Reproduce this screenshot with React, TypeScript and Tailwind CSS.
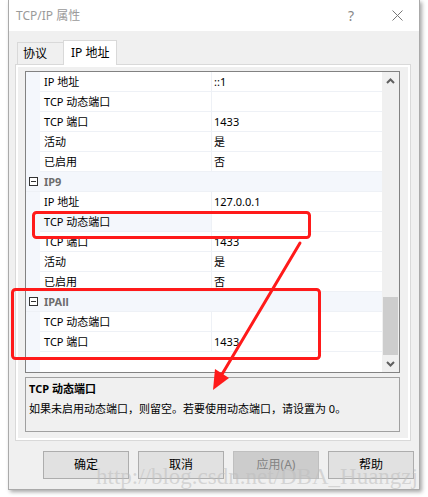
import React from 'react';

type Row =
  | { kind: 'cat'; label: string }
  | { kind: 'prop'; name: string; value: string; selected?: boolean };

const rows: Row[] = [
  { kind: 'prop', name: 'IP 地址', value: '::1' },
  { kind: 'prop', name: 'TCP 动态端口', value: '' },
  { kind: 'prop', name: 'TCP 端口', value: '1433' },
  { kind: 'prop', name: '活动', value: '是' },
  { kind: 'prop', name: '已启用', value: '否' },
  { kind: 'cat', label: 'IP9' },
  { kind: 'prop', name: 'IP 地址', value: '127.0.0.1' },
  { kind: 'prop', name: 'TCP 动态端口', value: '', selected: true },
  { kind: 'prop', name: 'TCP 端口', value: '1433' },
  { kind: 'prop', name: '活动', value: '是' },
  { kind: 'prop', name: '已启用', value: '否' },
  { kind: 'cat', label: 'IPAll' },
  { kind: 'prop', name: 'TCP 动态端口', value: '' },
  { kind: 'prop', name: 'TCP 端口', value: '1433' },
];

const MinusBox: React.FC = () => (
  <div className="w-[9px] h-[9px] border border-[#333] bg-white flex items-center justify-center">
    <div className="w-[5px] h-px bg-[#333]" />
  </div>
);

const Chevron: React.FC<{ up?: boolean }> = ({ up }) => (
  <svg width="9" height="6" viewBox="0 0 9 6">
    <path
      d={up ? 'M1 5 L4.5 1.5 L8 5' : 'M1 1 L4.5 4.5 L8 1'}
      fill="none"
      stroke="#606060"
      strokeWidth="2"
    />
  </svg>
);

const PropertyGrid: React.FC = () => (
  <div className="h-[302px] border border-[#828282] bg-white flex">
    {/* Rows */}
    <div className="w-[356px] flex flex-col">
      {rows.map((r, i) =>
        r.kind === 'cat' ? (
          <div key={i} className="h-[20px] flex bg-[#f4f7fc] border-b border-[#eef1f6]">
            <div className="w-[14px] flex items-center justify-end pr-[2px]">
              <MinusBox />
            </div>
            <div className="pl-[4px] text-[11px] leading-[19px] font-bold text-[#6d6d6d]">{r.label}</div>
          </div>
        ) : (
          <div key={i} className="h-[20px] flex">
            <div className="w-[14px] bg-[#f4f7fc]" />
            <div
              className={`w-[172px] border-r border-b border-[#eef1f6] pl-[4px] text-[11px] leading-[19px] text-black ${
                r.selected ? 'bg-[#f4f7fc]' : 'bg-white'
              }`}
            >
              {r.name}
            </div>
            <div className="flex-1 border-b border-[#eef1f6] pl-[2px] text-[11px] leading-[19px] text-black">
              {r.value}
            </div>
          </div>
        )
      )}
      <div className="flex-1 flex">
        <div className="w-[14px] bg-[#f4f7fc]" />
      </div>
    </div>

    {/* Scrollbar */}
    <div className="w-[17px] bg-[#f0f0f0] flex flex-col">
      <div className="h-[17px] flex items-center justify-center">
        <Chevron up />
      </div>
      <div className="flex-1" />
      <div className="h-[58px] mx-px bg-[#cdcdcd]" />
      <div className="h-[17px] flex items-center justify-center">
        <Chevron />
      </div>
    </div>
  </div>
);

const Button: React.FC<{ label: string; disabled?: boolean }> = ({ label, disabled }) => (
  <div
    className={`w-[86px] h-[28px] border flex items-center justify-center text-[12px] ${
      disabled ? 'bg-[#cccccc] border-[#bfbfbf] text-[#838383]' : 'bg-[#e1e1e1] border-[#adadad] text-black'
    }`}
  >
    {label}
  </div>
);

export default function App() {
  return (
    <div className="relative w-[428px] h-[497px] bg-white overflow-hidden font-['Noto_Sans','Noto_Sans_CJK_SC',sans-serif]">
      <div className="pl-[8px]">
        <div className="w-[412px] h-[490px] border-l border-r border-b border-[#aaaaaa] shadow-[2px_2px_4px_rgba(0,0,0,0.35)] flex flex-col">
          {/* Title bar */}
          <div className="h-[31px] bg-white flex items-center pl-[7px] pr-[16px]">
            <span className="text-[12px] text-[#9a9a9a]">TCP/IP 属性</span>
            <span className="ml-auto text-[14px] text-[#888] mr-[38px]">?</span>
            <svg width="11" height="11" viewBox="0 0 11 11">
              <path d="M0.5 0.5 L10.5 10.5 M10.5 0.5 L0.5 10.5" stroke="#777" strokeWidth="1" />
            </svg>
          </div>

          {/* Body */}
          <div className="flex-1 bg-[#f0f0f0] pt-[9px] pl-[6px]">
            {/* Tabs */}
            <div className="h-[24px] flex items-end pl-[2px]">
              <div className="h-[22px] w-[46px] border border-b-0 border-r-0 border-[#d9d9d9] bg-[#f0f0f0] text-[12px] leading-[21px] pl-[5px] text-black">
                协议
              </div>
              <div className="relative z-10 -mb-px h-[25px] w-[54px] border border-b-0 border-[#d9d9d9] bg-white text-[12px] leading-[23px] pl-[7px] text-black">
                IP 地址
              </div>
            </div>

            {/* Tab panel */}
            <div className="w-[396px] h-[377px] border border-[#d9d9d9] bg-white p-[2px]">
              <div className="h-full bg-[#f0f0f0] pt-[4px] pl-[7px] pr-[8px]">
                <PropertyGrid />
                <div className="mt-[4px] h-[55px] border border-[#a0a0a0] bg-[#f0f0f0] px-[3px] pt-[2px] text-[11px] text-black">
                  <div className="font-bold leading-[17px]">TCP 动态端口</div>
                  <div className="mt-[3px] leading-[17px]">如果未启用动态端口，则留空。若要使用动态端口，请设置为 0。</div>
                </div>
              </div>
            </div>

            {/* Buttons */}
            <div className="mt-[10px] flex gap-[9px] pl-[28px]">
              <Button label="确定" />
              <Button label="取消" />
              <Button label="应用(A)" disabled />
              <Button label="帮助" />
            </div>
          </div>
        </div>
      </div>

      {/* Watermark */}
      <div className="absolute left-[96px] top-[462px] text-[23px] leading-[30px] text-[#bdbdbd]/55 font-['Liberation_Serif',serif] whitespace-nowrap">
        http://blog.csdn.net/DBA_Huangzj
      </div>

      {/* Red annotations */}
      <svg className="absolute left-0 top-0 pointer-events-none" width="428" height="497" viewBox="0 0 428 497">
        <rect x="33.5" y="212.5" width="276" height="25" rx="3" fill="none" stroke="#ff1a1a" strokeWidth="3" />
        <rect x="12.5" y="289.5" width="307" height="69" rx="3" fill="none" stroke="#ff1a1a" strokeWidth="3" />
        <path d="M300 243 L221 376" stroke="#ff1a1a" strokeWidth="3" strokeLinecap="round" />
        <polygon points="213,390 215,369 229,378" fill="#ff1a1a" />
      </svg>
    </div>
  );
}
